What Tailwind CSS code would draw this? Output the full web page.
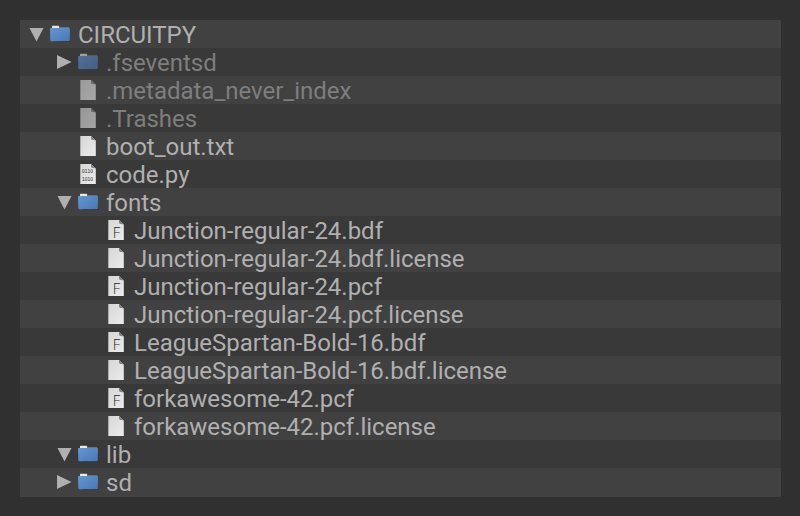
<!DOCTYPE html>
<html lang="en">
<head>
<meta charset="utf-8">
<title>CIRCUITPY</title>
<script src="https://cdn.jsdelivr.net/npm/@tailwindcss/browser@4"></script>
</head>
<body class="bg-[#303030]">
<svg class="absolute size-0">
  <defs>
    <linearGradient id="blue" x1="0" y1="0" x2="1" y2="1"><stop offset="0" stop-color="#6496d2"/><stop offset="1" stop-color="#4a78b4"/></linearGradient>
    <linearGradient id="paper" x1="0" y1="0" x2="1" y2="1"><stop offset="0" stop-color="#d6d6d6"/><stop offset="1" stop-color="#ececec"/></linearGradient>
    <symbol id="down" viewBox="0 0 22 28"><path d="M1.5 8H15.5L8.5 21.5Z" fill="#b0b0b0"/></symbol>
    <symbol id="right" viewBox="0 0 22 28"><path d="M1 7V21L15.5 14Z" fill="#b0b0b0"/></symbol>
    <symbol id="folder" viewBox="0 0 20 28"><path d="M3 20.5H20.5V22H5Z" fill="#2b2e33"/><path d="M2 8.5V6.2Q2 5.7 2.5 5.7H8.5L9.5 7V9H2Z" fill="#e8e8e4"/><path d="M9 7H19V8.5H9Z" fill="#697483"/><path d="M.8 8H19.2Q20 8 20 8.8L19.7 20.3Q19.6 21.2 18.8 21.2H1.2Q.4 21.2 .3 20.3L0 8.8Q0 8 .8 8Z" fill="url(#blue)"/></symbol>
    <symbol id="file" viewBox="0 0 20 28"><path d="M2.3 4H13L17.8 8.5V24H2.3Z" fill="url(#paper)"/><path d="M13 4L17.800 8.500L13.200 7.500Z" fill="#777977"/></symbol>
  </defs>
</svg>
<main id="tree" class="ml-5 mt-5 h-[477px] w-[761px] overflow-hidden bg-[#414141] font-[Roboto,sans-serif] text-2xl/7 tracking-[-0.01px] text-[#b0b0b0]"></main>
<script>
  // name, depth, icon, arrow, dimmed
  const rows = [
    ['CIRCUITPY', 0, 'folder', 'down'],
    ['.fseventsd', 1, 'folder', 'right', true],
    ['.metadata_never_index', 1, 'file', '', true],
    ['.Trashes', 1, 'file', '', true],
    ['boot_out.txt', 1, 'file'],
    ['code.py', 1, 'code'],
    ['fonts', 1, 'folder', 'down'],
    ['Junction-regular-24.bdf', 2, 'font'],
    ['Junction-regular-24.bdf.license', 2, 'file'],
    ['Junction-regular-24.pcf', 2, 'font'],
    ['Junction-regular-24.pcf.license', 2, 'file'],
    ['LeagueSpartan-Bold-16.bdf', 2, 'font'],
    ['LeagueSpartan-Bold-16.bdf.license', 2, 'file'],
    ['forkawesome-42.pcf', 2, 'font'],
    ['forkawesome-42.pcf.license', 2, 'file'],
    ['lib', 1, 'folder', 'down'],
    ['sd', 1, 'folder', 'right'],
  ];
  const marks = {
    font: '<text x="6.8" y="21.5" font-size="14.5" font-family="Open Sans" font-weight="300" fill="#222">F</text>',
    code: '<g font-family="DejaVu Sans" font-size="5.5" fill="#222"><text x="4" y="13.3" textLength="11" lengthAdjust="spacingAndGlyphs">0110</text><text x="4" y="21.3" textLength="11" lengthAdjust="spacingAndGlyphs">1010</text></g>',
  };
  document.getElementById('tree').innerHTML = rows.map(([name, depth, icon, arrow, dim], i) => `
    <div class="flex h-7 whitespace-nowrap ${i % 2 ? 'bg-[#393939]' : 'bg-[#414141]'}" style="padding-left:${8 + depth * 28}px">
      <svg class="h-7 w-[22px] shrink-0">${arrow ? `<use href="#${arrow}"/>` : ''}</svg>
      <svg class="mr-2 h-7 w-5 shrink-0 ${dim ? 'opacity-60' : ''}"><use href="#${icon === 'folder' ? 'folder' : 'file'}"/>${marks[icon] || ''}</svg>
      <span class="relative top-px ${dim ? 'text-[#7e7e7e]' : ''}">${name}</span>
    </div>`).join('');
</script>
</body>
</html>
